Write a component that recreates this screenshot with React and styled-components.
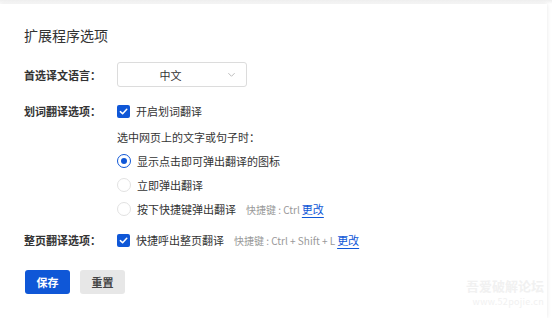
import React from "react";
import styled, { createGlobalStyle } from "styled-components";

const Global = createGlobalStyle`
  html, body { margin: 0; padding: 0; background: #fff; }
  body {
    font-family: "Noto Sans CJK SC", "Noto Sans", "Liberation Sans", sans-serif;
    color: #333;
    -webkit-font-smoothing: antialiased;
  }
`;

const BLUE = "#0f57d7";

const Frame = styled.div`
  position: relative;
  width: 552px;
  height: 318px;
  overflow: hidden;
  padding: 4px 5px 0 0;
  box-sizing: border-box;
  background: linear-gradient(#eeeeee, #ffffff 4px);
`;

const Card = styled.div`
  height: 100%;
  background: #fff;
  box-shadow: 0 0 4px rgba(0, 0, 0, 0.1);
  padding: 21px 0 0 24px;
  box-sizing: border-box;
  display: flex;
  flex-direction: column;
`;

const Title = styled.h1`
  margin: 0 0 17px;
  font-size: 14px;
  line-height: 20px;
  font-weight: 400;
  color: #333;
`;

const Row = styled.div`
  display: flex;
  align-items: ${(p) => (p.$top ? "flex-start" : "center")};
  margin-top: ${(p) => p.$mt || 0}px;
`;

const Label = styled.div`
  width: 93px;
  flex: none;
  font-size: 11px;
  line-height: 16px;
  font-weight: 700;
  color: #333;
`;

const Select = styled.div`
  width: 130px;
  height: 25px;
  box-sizing: border-box;
  border: 1px solid #dcdcdc;
  border-radius: 3px;
  display: flex;
  align-items: center;
  position: relative;
  font-size: 11px;
  color: #333;
`;

const SelectText = styled.span`
  flex: 1;
  text-align: center;
  padding-right: 4px;
`;

const Chevron = styled.svg`
  width: 9px;
  height: 9px;
  margin-right: 10px;
`;

const Column = styled.div`
  display: flex;
  flex-direction: column;
`;

const Line = styled.div`
  display: flex;
  align-items: center;
  height: 16px;
  font-size: 11px;
  color: #333;
  margin-top: ${(p) => p.$mt || 0}px;
`;

const Box = styled.span`
  width: 13px;
  height: 13px;
  border-radius: 2px;
  background: ${BLUE};
  display: inline-flex;
  align-items: center;
  justify-content: center;
  margin-right: 6px;
  flex: none;
`;

const Radio = styled.span`
  width: 14px;
  height: 14px;
  box-sizing: border-box;
  border-radius: 50%;
  border: 1px solid ${(p) => (p.$on ? BLUE : "#e2e2e2")};
  display: inline-flex;
  align-items: center;
  justify-content: center;
  margin-right: 6px;
  flex: none;
  &::after {
    content: "";
    width: 6px;
    height: 6px;
    border-radius: 50%;
    background: ${(p) => (p.$on ? BLUE : "transparent")};
  }
`;

const Hint = styled.span`
  font-size: 10px;
  color: #999;
  margin-left: 10px;
  white-space: pre;
`;

const Link = styled.a`
  font-size: 11px;
  color: ${BLUE};
  text-decoration: underline;
  text-underline-offset: 3px;
  margin-left: 2px;
  cursor: pointer;
`;

const Buttons = styled.div`
  display: flex;
  gap: 10px;
  margin-top: 22px;
  padding-left: 1px;
`;

const Button = styled.button`
  width: 45px;
  height: 24px;
  border: none;
  border-radius: 3px;
  font-family: inherit;
  font-size: 11px;
  font-weight: 700;
  background: ${(p) => (p.$primary ? BLUE : "#e7e7e7")};
  color: ${(p) => (p.$primary ? "#fff" : "#444")};
  padding: 0;
  cursor: pointer;
`;

const Watermark = styled.div`
  position: absolute;
  right: 8px;
  top: 278px;
  text-align: right;
  color: #f1f1f1;
  display: flex;
  flex-direction: column;
  align-items: flex-end;
  gap: 3px;
`;

const WmBig = styled.div`
  font-size: 13px;
  line-height: 15px;
  font-weight: 700;
`;

const WmSmall = styled.div`
  font-size: 9px;
  line-height: 11px;
  letter-spacing: 0.3px;
`;

const Check = () => (
  <svg width="9" height="9" viewBox="0 0 10 10">
    <path d="M1.5 5.2 L4 7.5 L8.6 2.6" fill="none" stroke="#fff" strokeWidth="1.7" strokeLinecap="round" strokeLinejoin="round" />
  </svg>
);

export default function App() {
  return (
    <>
      <Global />
      <Frame>
        <Card>
          <Title>扩展程序选项</Title>
          <Row>
            <Label>首选译文语言：</Label>
            <Select>
              <SelectText>中文</SelectText>
              <Chevron viewBox="0 0 10 10">
                <path d="M1.5 3.5 L5 7 L8.5 3.5" fill="none" stroke="#b5b5b5" strokeWidth="1" />
              </Chevron>
            </Select>
          </Row>
          <Row $top $mt={16}>
            <Label>划词翻译选项：</Label>
            <Column>
              <Line>
                <Box><Check /></Box>
                开启划词翻译
              </Line>
              <Line $mt={10}>选中网页上的文字或句子时：</Line>
              <Line $mt={8}>
                <Radio $on />
                显示点击即可弹出翻译的图标
              </Line>
              <Line $mt={8}>
                <Radio />
                立即弹出翻译
              </Line>
              <Line $mt={8}>
                <Radio />
                按下快捷键弹出翻译
                <Hint>快捷键 : Ctrl</Hint>
                <Link>更改</Link>
              </Line>
            </Column>
          </Row>
          <Row $mt={15}>
            <Label>整页翻译选项：</Label>
            <Line>
              <Box><Check /></Box>
              快捷呼出整页翻译
              <Hint>快捷键 : Ctrl + Shift + L</Hint>
              <Link>更改</Link>
            </Line>
          </Row>
          <Buttons>
            <Button $primary>保存</Button>
            <Button>重置</Button>
          </Buttons>
        </Card>
        <Watermark>
          <WmBig>吾爱破解论坛</WmBig>
          <WmSmall>www.52pojie.cn</WmSmall>
        </Watermark>
      </Frame>
    </>
  );
}
